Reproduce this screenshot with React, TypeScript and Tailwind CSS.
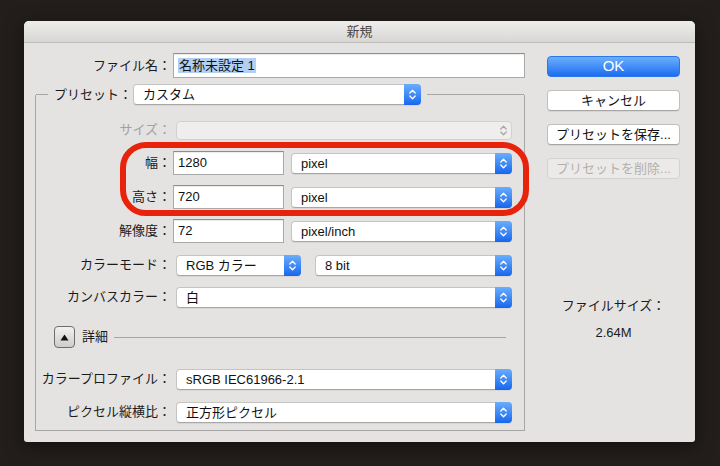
import React from "react";

const Chevrons = ({ color = "white" }: { color?: string }) => (
  <svg width="9" height="13" viewBox="0 0 9 13" fill="none" stroke={color} strokeWidth="1.3" strokeLinecap="round" strokeLinejoin="round">
    <path d="M1.8 5 L4.5 2.3 L7.2 5" />
    <path d="M1.8 8 L4.5 10.7 L7.2 8" />
  </svg>
);

const Select = ({ value, className = "" }: { value: string; className?: string }) => (
  <div className={`flex h-[21px] items-stretch rounded-[4px] border border-[#c6c4c2] border-b-[#a9a7a5] bg-white shadow-[0_1px_0_rgba(0,0,0,0.06)] ${className}`}>
    <span className="flex-1 truncate pl-[9px] text-[13px] leading-[19px] text-[#111]">{value}</span>
    <span className="-my-px -mr-px flex w-[17px] items-center justify-center rounded-r-[4px] bg-gradient-to-b from-[#69adfc] to-[#1666ee]">
      <Chevrons />
    </span>
  </div>
);

const TextField = ({ value, className = "" }: { value: string; className?: string }) => (
  <div className={`h-[24px] border border-[#a9a9a9] border-t-[#8e8e8e] bg-white pl-[4px] text-[13px] leading-[22px] text-[#111] shadow-[inset_0_1px_1px_rgba(0,0,0,0.08)] ${className}`}>
    {value}
  </div>
);

const Label = ({ children, muted = false }: { children: React.ReactNode; muted?: boolean }) => (
  <span className={`w-[135px] shrink-0 text-right text-[13px] leading-[16px] ${muted ? "text-[#a3a1a0]" : "text-[#1b1b1b]"}`}>
    {children}
  </span>
);

const Button = ({ children, disabled = false }: { children: React.ReactNode; disabled?: boolean }) => (
  <div
    className={`flex h-[21px] items-center justify-center rounded-[4px] border text-[13px] ${
      disabled
        ? "border-[#d4d2d0] bg-[#eceae8] text-[#b2b0ae]"
        : "border-[#c2c0be] border-b-[#a8a6a4] bg-white text-[#111] shadow-[0_1px_0_rgba(0,0,0,0.06)]"
    }`}
  >
    {children}
  </div>
);

export default function App() {
  return (
    <div className="h-[466px] w-[720px] bg-[#231e1c] pl-[24px] pt-[21px] font-['Liberation_Sans','Noto_Sans_CJK_JP',sans-serif]">
      <div className="relative flex h-[421px] w-[671px] flex-col rounded-t-[5px] rounded-b-[3px] bg-[#e5e3e1] shadow-[0_4px_18px_rgba(0,0,0,0.5)]">
        {/* Title bar */}
        <div className="flex h-[22px] items-center justify-center rounded-t-[5px] border-b border-[#bebcba] bg-gradient-to-b from-[#eeedeb] to-[#d9d7d5] text-[13px] text-[#4a4847]">
          新規
        </div>

        <div className="flex">
          {/* Left column */}
          <div className="flex w-[501px] flex-col">
            <div className="mt-[10px] flex h-[25px] items-center">
              <span className="w-[147px] shrink-0 text-right text-[13px] leading-[16px] text-[#1b1b1b]">ファイル名：</span>
              <div className="ml-[2px] h-[25px] w-[352px] border border-[#a9a9a9] border-t-[#8e8e8e] bg-white pl-[4px] text-[13px] leading-[23px] shadow-[inset_0_1px_1px_rgba(0,0,0,0.08)]">
                <span className="bg-[#b3d0f3] px-[1px] text-[#111]">名称未設定 1</span>
              </div>
            </div>

            {/* Group box */}
            <div className="ml-[11px] mt-[17px] flex h-[336px] flex-col border-x border-b border-[#a8a6a4]">
              <div className="-mt-[11px] flex h-[21px] items-center">
                <div className="h-px w-[12px] bg-[#a8a6a4]" />
                <span className="ml-[6px] text-[13px] leading-[16px] text-[#1b1b1b]">プリセット：</span>
                <Select value="カスタム" className="ml-[1px] w-[288px]" />
                <div className="ml-[6px] h-px flex-1 bg-[#a8a6a4]" />
              </div>

              <div className="mt-[13px] flex h-[24px] items-center">
                <Label muted>サイズ：</Label>
                <div className="ml-[5px] flex h-[19px] w-[336px] items-center justify-end rounded-[4px] border border-[#d3d1cf] bg-[#efeeec] pr-[3px]">
                  <Chevrons color="#a9a7a5" />
                </div>
              </div>

              <div className="mt-[9px] flex h-[24px] items-center">
                <Label>幅：</Label>
                <TextField value="1280" className="ml-[2px] w-[111px]" />
                <Select value="pixel" className="ml-[7px] w-[221px]" />
              </div>

              <div className="mt-[10px] flex h-[24px] items-center">
                <Label>高さ：</Label>
                <TextField value="720" className="ml-[2px] w-[111px]" />
                <Select value="pixel" className="ml-[7px] w-[221px]" />
              </div>

              <div className="mt-[10px] flex h-[24px] items-center">
                <Label>解像度：</Label>
                <TextField value="72" className="ml-[2px] w-[111px]" />
                <Select value="pixel/inch" className="ml-[7px] w-[221px]" />
              </div>

              <div className="mt-[10px] flex h-[24px] items-center">
                <Label>カラーモード：</Label>
                <Select value="RGB カラー" className="ml-[5px] w-[125px]" />
                <Select value="8 bit" className="ml-[14px] w-[197px]" />
              </div>

              <div className="mt-[8px] flex h-[24px] items-center">
                <Label>カンバスカラー：</Label>
                <Select value="白" className="ml-[5px] w-[336px]" />
              </div>

              <div className="mt-[16px] flex h-[24px] items-center">
                <div className="ml-[18px] flex h-[22px] w-[21px] items-center justify-center rounded-[4px] border border-[#6f6d6b] bg-gradient-to-b from-[#f2f1f0] to-[#cfcdcb]">
                  <svg width="9" height="7" viewBox="0 0 9 7">
                    <path d="M4.5 0.5 L8.5 6.5 L0.5 6.5 Z" fill="#111" />
                  </svg>
                </div>
                <span className="ml-[7px] text-[13px] leading-[16px] text-[#1b1b1b]">詳細</span>
                <div className="ml-[6px] mr-[18px] h-px flex-1 bg-[#a8a6a4]" />
              </div>

              <div className="mt-[18px] flex h-[24px] items-center">
                <Label>カラープロファイル：</Label>
                <Select value="sRGB IEC61966-2.1" className="ml-[5px] w-[336px]" />
              </div>

              <div className="mt-[9px] flex h-[24px] items-center">
                <Label>ピクセル縦横比：</Label>
                <Select value="正方形ピクセル" className="ml-[5px] w-[336px]" />
              </div>
            </div>
          </div>

          {/* Right column */}
          <div className="ml-[22px] flex w-[133px] flex-col">
            <div className="mt-[13px] flex h-[21px] items-center justify-center rounded-[4px] border border-[#2a78ea] bg-gradient-to-b from-[#6aaffc] to-[#1a6cf0] text-[15px] text-white">
              OK
            </div>
            <div className="mt-[13px]">
              <Button>キャンセル</Button>
            </div>
            <div className="mt-[13px]">
              <Button>プリセットを保存...</Button>
            </div>
            <div className="mt-[13px]">
              <Button disabled>プリセットを削除...</Button>
            </div>
            <div className="mt-[119px] text-center text-[13px] leading-[16px] text-[#1b1b1b]">ファイルサイズ：</div>
            <div className="mt-[11px] text-center text-[13px] leading-[16px] text-[#1b1b1b]">2.64M</div>
          </div>
        </div>

        {/* Red annotation */}
        <div className="absolute left-[96px] top-[121px] h-[74px] w-[409px] rounded-[26px] border-[6px] border-[#e8230c]" />
      </div>
    </div>
  );
}
